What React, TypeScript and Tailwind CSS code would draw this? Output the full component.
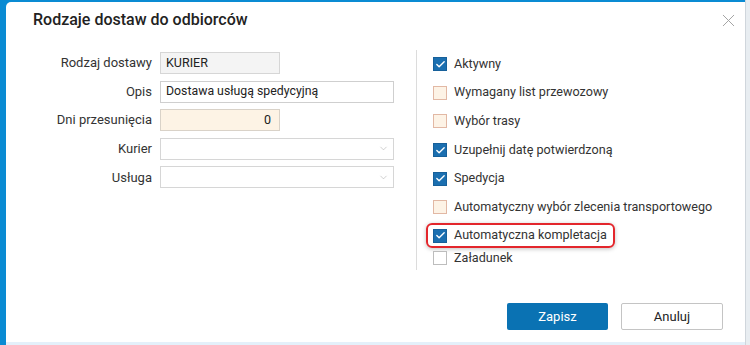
import { X, ChevronDown, Check } from "lucide-react";

const font = { fontFamily: "Roboto, 'Noto Sans', sans-serif" };

function Field({ label, children }: { label: string; children: React.ReactNode }) {
  return (
    <div className="flex items-center h-[22px]">
      <div className="w-[119px] shrink-0 text-right text-[13px] text-[#333]">{label}</div>
      <div className="ml-[8px] shrink-0">{children}</div>
    </div>
  );
}

function Box({ state }: { state: "on" | "off" | "warn" }) {
  if (state === "on")
    return (
      <span className="w-[14px] h-[14px] shrink-0 bg-[#1b6fb0] border border-[#17609a] flex items-center justify-center">
        <Check size={11} strokeWidth={3} className="text-white" />
      </span>
    );
  if (state === "warn")
    return <span className="w-[14px] h-[14px] shrink-0 bg-[#fdf3e6] border border-[#e2b8a4]" />;
  return <span className="w-[14px] h-[14px] shrink-0 bg-white border border-[#bdbdbd]" />;
}

function Option({ label, state, marked = false }: { label: string; state: "on" | "off" | "warn"; marked?: boolean }) {
  return (
    <div className="h-[28.6px] flex items-center">
      <div
        className={
          "h-[25px] inline-flex items-center gap-[7px] pl-[5px] pr-[6px] rounded-[6px] border-2 " +
          (marked ? "border-[#e3262c] shadow-[0_1px_4px_rgba(0,0,0,0.25)]" : "border-transparent")
        }
      >
        <Box state={state} />
        <span className="text-[12.6px] text-[#333] whitespace-nowrap">{label}</span>
      </div>
    </div>
  );
}

export default function App() {
  return (
    <div className="w-[750px] h-[345px] bg-[#0a8bd3] flex overflow-hidden" style={font}>
      <div className="w-[6px] shrink-0" />
      <div className="flex flex-col">
        <div className="h-[2px]" />
        <div className="w-[739px] h-[340px] bg-white rounded-tl-[5px] flex flex-col">
          {/* nagłówek */}
          <div className="h-[36px] flex items-center justify-between pl-[27px] pr-[6px]">
            <h1 className="text-[16px] font-medium text-[#222]">Rodzaje dostaw do odbiorców</h1>
            <X size={21} strokeWidth={1.1} className="text-[#a0a0a0]" />
          </div>

          {/* formularz */}
          <div className="mt-[12px] flex">
            <div className="w-[410px] shrink-0 pl-[27px] pt-[2px] flex flex-col gap-[6.6px]">
              <Field label="Rodzaj dostawy">
                <div className="w-[120px] h-[22px] border border-[#d6d6d6] bg-[#f4f4f4] px-[5px] text-[12.5px] text-[#222] flex items-center">KURIER</div>
              </Field>
              <Field label="Opis">
                <div className="w-[234px] h-[22px] border border-[#cfcfcf] bg-white px-[5px] text-[12.3px] text-[#222] flex items-center">Dostawa usługą spedycyjną</div>
              </Field>
              <Field label="Dni przesunięcia">
                <div className="w-[120px] h-[22px] border border-[#d9d2c8] bg-[#fdf3e5] px-[8px] text-[12.5px] text-[#222] flex items-center justify-end">0</div>
              </Field>
              <Field label="Kurier">
                <div className="w-[234px] h-[22px] border border-[#d6d6d6] bg-white flex items-center justify-end pr-[4px]">
                  <ChevronDown size={11} strokeWidth={1.2} className="text-[#a8a8a8]" />
                </div>
              </Field>
              <Field label="Usługa">
                <div className="w-[234px] h-[22px] border border-[#d6d6d6] bg-white flex items-center justify-end pr-[4px]">
                  <ChevronDown size={11} strokeWidth={1.2} className="text-[#a8a8a8]" />
                </div>
              </Field>
            </div>

            <div className="w-px h-[220px] bg-[#dcdcdc] shrink-0" />

            <div className="pl-[9px] flex flex-col">
              <Option label="Aktywny" state="on" />
              <Option label="Wymagany list przewozowy" state="warn" />
              <Option label="Wybór trasy" state="warn" />
              <Option label="Uzupełnij datę potwierdzoną" state="on" />
              <Option label="Spedycja" state="on" />
              <Option label="Automatyczny wybór zlecenia transportowego" state="warn" />
              <Option label="Automatyczna kompletacja" state="on" marked />
              <div className="-mt-[6px]">
                <Option label="Załadunek" state="off" />
              </div>
            </div>
          </div>

          {/* przyciski */}
          <div className="mt-auto mb-[12px] flex justify-end gap-[13px] pr-[22px]">
            <button className="w-[101px] h-[27px] rounded-[2px] bg-[#0a72b3] text-white text-[13px]">Zapisz</button>
            <button className="w-[102px] h-[27px] rounded-[2px] bg-white border border-[#c4c4c4] text-[#222] text-[13px]">Anuluj</button>
          </div>
        </div>
        <div className="flex-1 bg-[#e4f0fa]" />
      </div>
      <div className="flex-1 bg-[#e8edf1] border-l border-[#d0d6dc]" />
    </div>
  );
}
